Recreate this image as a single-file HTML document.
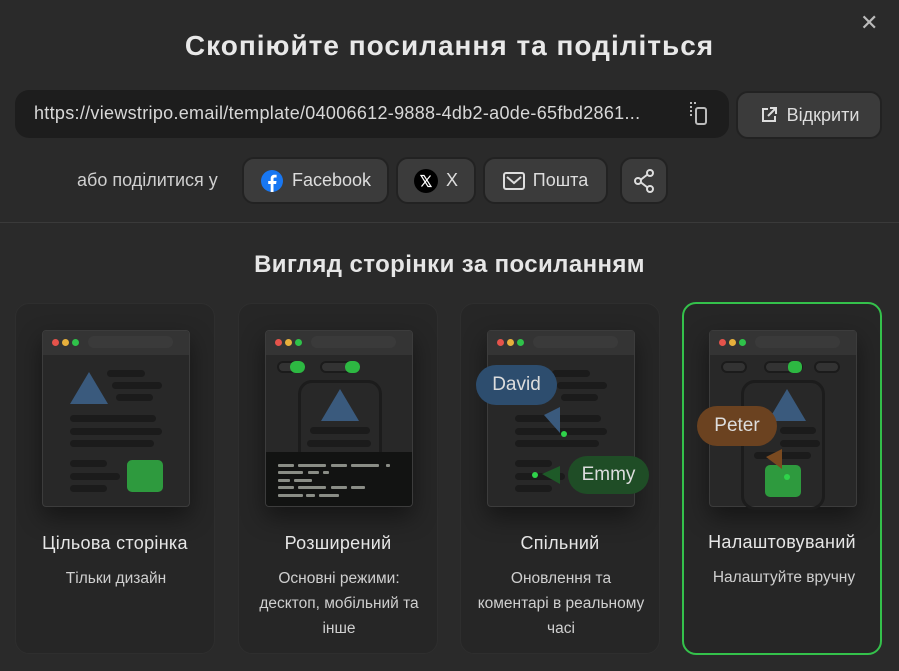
<!DOCTYPE html><html><head><meta charset="utf-8"><style>
*{box-sizing:border-box;margin:0;padding:0}
body{width:899px;height:671px;background:#2a2a2a;font-family:"Liberation Sans",sans-serif;color:#e6e6e6;position:relative;overflow:hidden}
.a{position:absolute}
.btn{position:absolute;background:#3b3b3b;border:2px solid #222;border-radius:12px;color:#ddd;font-size:18px;display:flex;align-items:center;justify-content:center;gap:8px}
.card{position:absolute;top:303px;width:200px;height:351px;background:#262626;border:1px solid #2e2e2e;border-radius:14px}
.mk{position:absolute;left:26px;top:26px;width:148px;height:177px;background:#282828;border:1px solid #3c3c3c;border-radius:4px;box-shadow:0 10px 24px rgba(0,0,0,.45);overflow:hidden}
.hd{position:absolute;left:0;top:0;width:100%;height:24px;background:#343434}
.d{position:absolute;top:8px;width:7px;height:7px;border-radius:50%}
.url{position:absolute;left:45px;top:5px;width:85px;height:12px;border-radius:6px;background:#3a3a3a}
.b{position:absolute;background:#1b1b1b;border-radius:4px;height:7px}
.tri{position:absolute;width:0;height:0;border-left:19px solid transparent;border-right:19px solid transparent;border-bottom:32px solid #3a5a7d}
.t1{position:absolute;left:-20px;right:-20px;text-align:center;top:229px;font-size:18px;letter-spacing:.3px;color:#e6e6e6}
.t2{position:absolute;left:9px;width:182px;text-align:center;top:262px;font-size:15.5px;line-height:25px;color:#cfcfcf}
.tl{position:absolute;height:3px;background:#8a8d86;border-radius:1px}
.tg{position:absolute;height:12px;border-radius:6px;border:2px solid #1b1b1b;background:#333}
</style></head><body>
<div class="a" style="left:-20px;top:30px;width:939px;text-align:center;font-size:28px;font-weight:bold;letter-spacing:1px;color:#e8e8e8">Скопіюйте посилання та поділіться</div>
<div class="a" style="left:860px;top:10px;font-size:22px;color:#bbb">✕</div>

<div class="a" style="left:15px;top:90px;width:714px;height:48px;background:#1d1d1d;border-radius:14px"></div>
<div class="a" style="left:34px;top:103px;font-size:18px;letter-spacing:.3px;color:#d8d8d8;white-space:nowrap">https://viewstripo.email/template/04006612-9888-4db2-a0de-65fbd2861...</div>
<svg class="a" style="left:688px;top:101px" width="22" height="26" viewBox="0 0 22 26"><g fill="#bbb"><rect x="2" y="1" width="2" height="2"/><rect x="6" y="1" width="2" height="2"/><rect x="2" y="5" width="2" height="2"/><rect x="2" y="9" width="2" height="2"/><rect x="2" y="13" width="2" height="2"/></g><rect x="8" y="7" width="10" height="16" rx="2" fill="none" stroke="#bbb" stroke-width="2"/></svg>
<div class="btn" style="left:736px;top:91px;width:146px;height:48px"><svg width="20" height="20" viewBox="0 0 20 20" fill="none" stroke="#ddd" stroke-width="2"><path d="M9 4H4v12h12v-5"/><path d="M11 3h6v6M17 3l-8 8"/></svg>Відкрити</div>

<div class="a" style="left:77px;top:170px;font-size:18px;color:#cfcfcf">або поділитися у</div>
<div class="btn" style="left:242px;top:157px;width:147px;height:47px"><svg width="24" height="24" viewBox="0 0 24 24"><circle cx="12" cy="12" r="11" fill="#1877f2"/><path d="M13.5 23v-8h2.6l.4-3h-3V10c0-.9.3-1.5 1.6-1.5h1.5V5.8c-.3 0-1.2-.1-2.2-.1-2.2 0-3.7 1.3-3.7 3.8V12H8.2v3h2.5v8z" fill="#fff"/></svg>Facebook</div>
<div class="btn" style="left:396px;top:157px;width:80px;height:47px"><svg width="24" height="24" viewBox="0 0 24 24"><circle cx="12" cy="12" r="12" fill="#000"/><path d="M7 6.5h3l7 11h-3zM16.5 6.5L7.5 17.5" stroke="#fff" stroke-width="1.2" fill="none"/></svg>X</div>
<div class="btn" style="left:483px;top:157px;width:125px;height:47px"><svg width="22" height="20" viewBox="0 0 22 20" fill="none" stroke="#ddd" stroke-width="2"><rect x="1" y="2" width="20" height="16" rx="2"/><path d="M4 6l7 6 7-6"/></svg>Пошта</div>
<div class="btn" style="left:620px;top:157px;width:48px;height:47px"><svg width="22" height="24" viewBox="0 0 22 24" fill="none" stroke="#ddd" stroke-width="2"><circle cx="17" cy="4" r="3"/><circle cx="5" cy="12" r="3"/><circle cx="17" cy="20" r="3"/><path d="M8 10.5l6.5-5M8 13.5l6.5 5"/></svg></div>

<div class="a" style="left:0;top:222px;width:899px;height:1px;background:#3a3a3a"></div>
<div class="a" style="left:0;top:251px;width:899px;text-align:center;font-size:24px;font-weight:bold;letter-spacing:.4px;color:#e6e6e6">Вигляд сторінки за посиланням</div>

<!-- card 1 -->
<div class="card" style="left:15px">
<div class="mk"><div class="hd"><div class="d" style="left:9px;background:#e5534b"></div><div class="d" style="left:19px;background:#e7b03c"></div><div class="d" style="left:29px;background:#2fc24a"></div><div class="url"></div></div>
<div class="tri" style="left:27px;top:41px"></div>
<div class="b" style="left:64px;top:39px;width:38px"></div><div class="b" style="left:69px;top:51px;width:50px"></div><div class="b" style="left:73px;top:63px;width:37px"></div>
<div class="b" style="left:27px;top:84px;width:86px"></div><div class="b" style="left:27px;top:97px;width:92px"></div><div class="b" style="left:27px;top:109px;width:84px"></div>
<div class="b" style="left:27px;top:129px;width:37px"></div><div class="b" style="left:27px;top:142px;width:50px"></div><div class="b" style="left:27px;top:154px;width:37px"></div>
<div class="a" style="left:84px;top:129px;width:36px;height:32px;background:#2e9a3e;border-radius:5px"></div>
</div>
<div class="t1">Цільова сторінка</div><div class="t2">Тільки дизайн</div></div>

<!-- card 2 -->
<div class="card" style="left:238px">
<div class="mk"><div class="hd"><div class="d" style="left:9px;background:#e5534b"></div><div class="d" style="left:19px;background:#e7b03c"></div><div class="d" style="left:29px;background:#2fc24a"></div><div class="url"></div></div>
<div class="tg" style="left:11px;top:30px;width:28px"></div><div class="a" style="left:24px;top:30px;width:15px;height:12px;border-radius:6px;background:#2db842"></div>
<div class="tg" style="left:54px;top:30px;width:40px"></div><div class="a" style="left:79px;top:30px;width:15px;height:12px;border-radius:6px;background:#2db842"></div>
<div class="a" style="left:32px;top:49px;width:84px;height:100px;border:3px solid #1c1c1c;border-radius:14px"></div>
<div class="tri" style="left:55px;top:58px;border-bottom-color:#3a5a7d"></div>
<div class="b" style="left:44px;top:96px;width:60px"></div><div class="b" style="left:41px;top:109px;width:64px"></div>
<div class="a" style="left:0;top:121px;width:148px;height:56px;background:#121312"></div>
<div class="tl" style="left:12px;top:133px;width:16px"></div><div class="tl" style="left:32px;top:133px;width:28px"></div><div class="tl" style="left:65px;top:133px;width:16px"></div><div class="tl" style="left:85px;top:133px;width:28px"></div><div class="tl" style="left:120px;top:133px;width:4px"></div>
<div class="tl" style="left:12px;top:140px;width:25px"></div><div class="tl" style="left:42px;top:140px;width:11px"></div><div class="tl" style="left:57px;top:140px;width:6px"></div>
<div class="tl" style="left:12px;top:148px;width:12px"></div><div class="tl" style="left:28px;top:148px;width:18px"></div>
<div class="tl" style="left:12px;top:155px;width:16px"></div><div class="tl" style="left:32px;top:155px;width:28px"></div><div class="tl" style="left:65px;top:155px;width:16px"></div><div class="tl" style="left:85px;top:155px;width:14px"></div>
<div class="tl" style="left:12px;top:163px;width:25px"></div><div class="tl" style="left:40px;top:163px;width:9px"></div><div class="tl" style="left:53px;top:163px;width:20px"></div>
</div>
<div class="t1">Розширений</div><div class="t2">Основні режими:<br>десктоп, мобільний та<br>інше</div></div>

<!-- card 3 -->
<div class="card" style="left:460px">
<div class="mk" style="overflow:visible"><div class="hd"><div class="d" style="left:9px;background:#e5534b"></div><div class="d" style="left:19px;background:#e7b03c"></div><div class="d" style="left:29px;background:#2fc24a"></div><div class="url"></div></div>
<div class="b" style="left:64px;top:39px;width:38px"></div><div class="b" style="left:69px;top:51px;width:50px"></div><div class="b" style="left:73px;top:63px;width:37px"></div>
<div class="b" style="left:27px;top:84px;width:86px"></div><div class="b" style="left:27px;top:97px;width:92px"></div><div class="b" style="left:27px;top:109px;width:84px"></div>
<div class="b" style="left:27px;top:129px;width:37px"></div><div class="b" style="left:27px;top:142px;width:50px"></div><div class="b" style="left:27px;top:154px;width:37px"></div>
<svg class="a" style="left:56px;top:76px" width="20" height="30"><path d="M0 8L16 0V26Z" fill="#3a5a7d"/></svg>
<div class="a" style="left:73px;top:100px;width:6px;height:6px;border-radius:50%;background:#2fd24a"></div>
<svg class="a" style="left:54px;top:135px" width="20" height="20"><path d="M0 8L18 0V18Z" fill="#1e5a28"/></svg>
<div class="a" style="left:44px;top:141px;width:6px;height:6px;border-radius:50%;background:#2fd24a"></div>
<div class="a" style="left:-12px;top:34px;width:81px;height:40px;border-radius:20px;background:#2d4d6e;color:#ddd;font-size:19px;text-align:center;line-height:40px">David</div>
<div class="a" style="left:80px;top:125px;width:81px;height:38px;border-radius:19px;background:#1f4d26;color:#ddd;font-size:19px;text-align:center;line-height:38px">Emmy</div>
</div>
<div class="t1">Спільний</div><div class="t2">Оновлення та<br>коментарі в реальному<br>часі</div></div>

<!-- card 4 -->
<div class="card" style="left:682px;border:2px solid #34c14b;height:353px;top:302px">
<div class="mk" style="left:25px;overflow:visible"><div class="hd"><div class="d" style="left:9px;background:#e5534b"></div><div class="d" style="left:19px;background:#e7b03c"></div><div class="d" style="left:29px;background:#2fc24a"></div><div class="url"></div></div>
<div class="tg" style="left:11px;top:30px;width:26px"></div>
<div class="tg" style="left:54px;top:30px;width:39px"></div><div class="a" style="left:78px;top:30px;width:14px;height:12px;border-radius:5px;background:#2db842"></div>
<div class="tg" style="left:104px;top:30px;width:26px"></div>
<div class="a" style="left:31px;top:49px;width:84px;height:130px;border:3px solid #1c1c1c;border-radius:14px"></div>
<div class="tri" style="left:58px;top:58px"></div>
<div class="b" style="left:70px;top:96px;width:36px"></div><div class="b" style="left:70px;top:109px;width:40px"></div><div class="b" style="left:44px;top:121px;width:57px"></div>
<div class="a" style="left:55px;top:134px;width:36px;height:32px;background:#2e9a3e;border-radius:5px"></div>
<svg class="a" style="left:56px;top:118px" width="20" height="22"><path d="M0 8L16 0V20Z" fill="#7a4a20"/></svg>
<div class="a" style="left:74px;top:143px;width:6px;height:6px;border-radius:50%;background:#2fd24a"></div>
<div class="a" style="left:-13px;top:75px;width:80px;height:40px;border-radius:20px;background:#6b4220;color:#ddd;font-size:19px;text-align:center;line-height:40px">Peter</div>
</div>
<div class="t1" style="top:228px">Налаштовуваний</div><div class="t2" style="top:261px">Налаштуйте вручну</div></div>
</body></html>
